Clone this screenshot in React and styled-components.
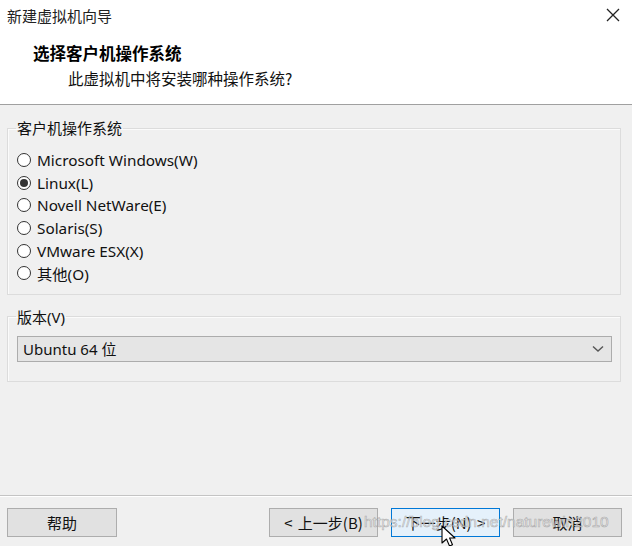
import React from "react";
import styled, { createGlobalStyle } from "styled-components";

const Global = createGlobalStyle`
  html, body { margin: 0; padding: 0; background: #f0f0f0; }
  body { font-family: "Noto Sans", "Noto Sans CJK SC", sans-serif; color: #000; }
  * { box-sizing: border-box; }
`;

const Window = styled.div`
  position: relative;
  width: 632px;
  height: 546px;
  display: flex;
  flex-direction: column;
  background: #f0f0f0;
  overflow: hidden;
`;

const TitleBar = styled.div`
  height: 30px;
  background: #fff;
  display: flex;
  align-items: center;
  justify-content: space-between;
  padding: 0 12px 0 7px;
`;

const TitleText = styled.div`
  font-family: "Noto Sans CJK SC", sans-serif;
  font-size: 15px;
  color: #222;
`;

const Header = styled.div`
  height: 75px;
  background: #fff;
  border-bottom: 1px solid #a0a0a0;
  padding: 12px 0 0 33px;
  display: flex;
  flex-direction: column;
`;

const HeaderTitle = styled.div`
  font-family: "Noto Sans CJK SC", sans-serif;
  font-weight: 700;
  font-size: 16.5px;
  line-height: 22px;
`;

const HeaderSub = styled.div`
  font-family: "Noto Sans CJK SC", sans-serif;
  font-size: 15.5px;
  line-height: 22px;
  margin: 3px 0 0 35px;
  color: #111;
`;

const Body = styled.div`
  flex: 1;
  padding: 13px 11px 0 7px;
  display: flex;
  flex-direction: column;
  gap: 12px;
`;

const Group = styled.fieldset`
  margin: 0;
  border: 1px solid #dcdcdc;
  box-shadow: inset 1px 1px 0 #fbfbfb;
  padding: ${(p) => p.$pad};
  min-width: 0;
`;

const Legend = styled.legend`
  font-family: "Noto Sans", "Noto Sans CJK SC", sans-serif;
  font-size: 15px;
  line-height: 20px;
  padding: 0 1px;
  margin-left: -1px;
  color: #111;
`;

const RadioList = styled.div`
  display: flex;
  flex-direction: column;
`;

const RadioRow = styled.div`
  height: 22.6px;
  display: flex;
  align-items: center;
  gap: 6px;
  font-family: "Noto Sans", "Noto Sans CJK SC", sans-serif;
  font-size: 15.3px;
  color: #111;
`;

const RadioCircle = styled.span`
  width: 14px;
  height: 14px;
  border-radius: 50%;
  border: 1px solid #333;
  background: #fff;
  display: inline-flex;
  align-items: center;
  justify-content: center;
  flex: none;
  &::after {
    content: "";
    width: 8px;
    height: 8px;
    border-radius: 50%;
    background: ${(p) => (p.$checked ? "#333" : "transparent")};
  }
`;

const Select = styled.div`
  height: 26px;
  width: 595px;
  background: #e5e5e5;
  border: 1px solid #acacac;
  display: flex;
  align-items: center;
  justify-content: space-between;
  padding: 0 7px 0 5px;
  font-family: "Noto Sans", "Noto Sans CJK SC", sans-serif;
  font-size: 15px;
  color: #111;
`;

const Footer = styled.div`
  height: 51px;
  border-top: 1px solid #c4c4c4;
  box-shadow: inset 0 1px 0 #fff;
  display: flex;
  align-items: flex-start;
  justify-content: space-between;
  padding: 12px 10px 0 7px;
`;

const ButtonGroup = styled.div`
  display: flex;
  gap: 13px;
`;

const Button = styled.div`
  width: ${(p) => p.$w || 109}px;
  height: 29px;
  display: flex;
  align-items: center;
  justify-content: center;
  background: ${(p) => (p.$focus ? "#e5f1fb" : "#e1e1e1")};
  border: 1px solid ${(p) => (p.$focus ? "#0078d7" : "#adadad")};
  font-family: "Noto Sans CJK SC", sans-serif;
  font-size: 15px;
  color: #111;
  word-spacing: 2px;
`;

const Watermark = styled.div`
  position: absolute;
  left: 364px;
  top: 513px;
  font-family: "Liberation Sans", sans-serif;
  font-size: 15.5px;
  color: rgba(235, 235, 235, 0.75);
  -webkit-text-stroke: 0.6px rgba(120, 120, 120, 0.55);
  pointer-events: none;
  white-space: nowrap;
`;

const Cursor = styled.svg`
  position: absolute;
  left: 441px;
  top: 525px;
`;

function CloseIcon() {
  return (
    <svg width="14" height="14" viewBox="0 0 14 14">
      <path d="M1 1L13 13M13 1L1 13" stroke="#222" strokeWidth="1.3" fill="none" />
    </svg>
  );
}

function Chevron() {
  return (
    <svg width="12" height="8" viewBox="0 0 12 8">
      <path d="M1 1.5L6 6L11 1.5" stroke="#555" strokeWidth="1.4" fill="none" />
    </svg>
  );
}

const options = [
  { label: "Microsoft Windows(W)" },
  { label: "Linux(L)", checked: true },
  { label: "Novell NetWare(E)" },
  { label: "Solaris(S)" },
  { label: "VMware ESX(X)" },
  { label: "其他(O)" },
];

export default function App() {
  return (
    <>
      <Global />
      <Window>
        <TitleBar>
          <TitleText>新建虚拟机向导</TitleText>
          <CloseIcon />
        </TitleBar>
        <Header>
          <HeaderTitle>选择客户机操作系统</HeaderTitle>
          <HeaderSub>此虚拟机中将安装哪种操作系统?</HeaderSub>
        </Header>
        <Body>
          <Group $pad="11px 0 9px 9px">
            <Legend>客户机操作系统</Legend>
            <RadioList>
              {options.map((o) => (
                <RadioRow key={o.label}>
                  <RadioCircle $checked={o.checked} />
                  {o.label}
                </RadioRow>
              ))}
            </RadioList>
          </Group>
          <Group $pad="9px 0 19px 9px">
            <Legend>版本(V)</Legend>
            <Select>
              <span>Ubuntu 64 位</span>
              <Chevron />
            </Select>
          </Group>
        </Body>
        <Footer>
          <Button $w={110}>帮助</Button>
          <ButtonGroup>
            <Button>&lt; 上一步(B)</Button>
            <Button $focus>下一步(N) &gt;</Button>
            <Button>取消</Button>
          </ButtonGroup>
        </Footer>
        <Watermark>https://blog.csdn.net/naturewin2010</Watermark>
        <Cursor width="20" height="24" viewBox="0 0 20 24">
          <path d="M1 1L1 18L5.5 14L8.5 21L11.5 19.8L8.6 13L14 13Z" fill="#fff" stroke="#000" strokeWidth="1.1" strokeLinejoin="round" />
        </Cursor>
      </Window>
    </>
  );
}
